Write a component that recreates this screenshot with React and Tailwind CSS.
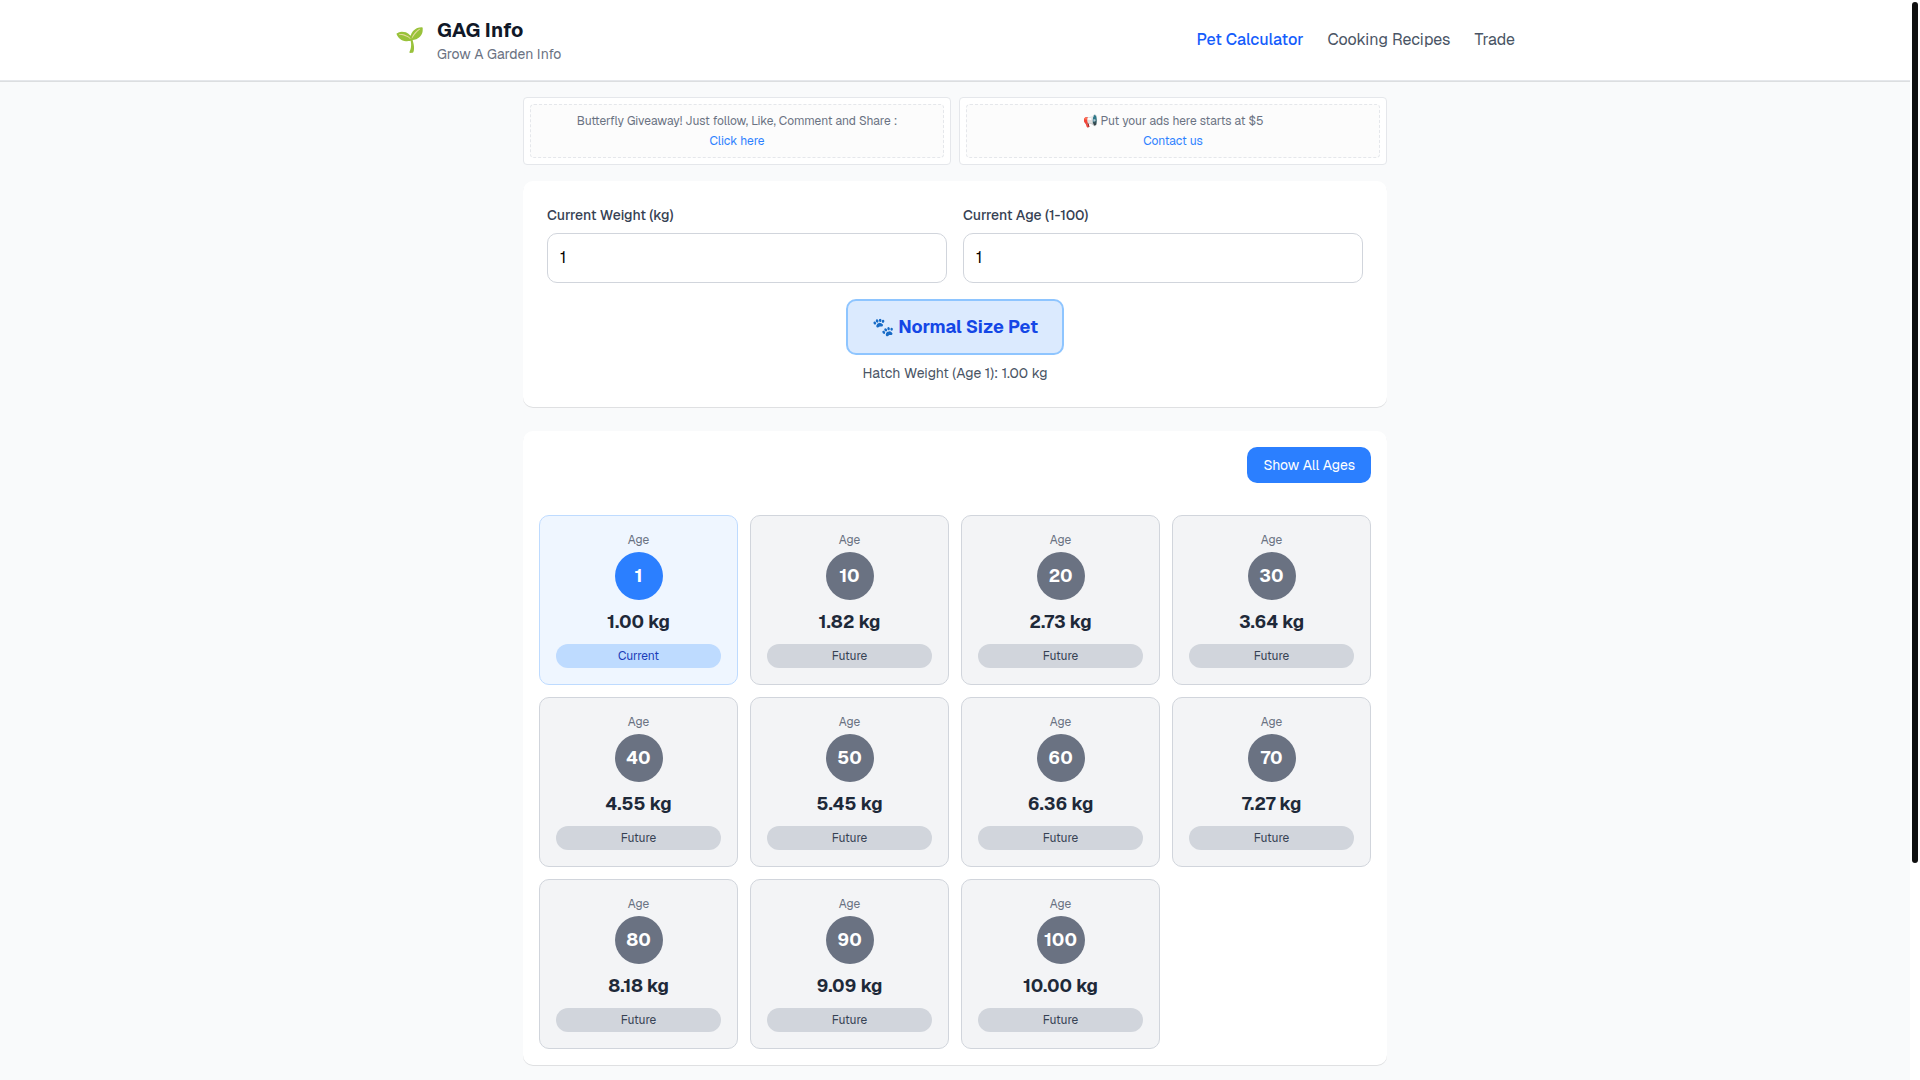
import { useState } from 'react'

const LINKS = ['Pet Calculator', 'Cooking Recipes', 'Trade']
const MILESTONES = [1, 10, 20, 30, 40, 50, 60, 70, 80, 90, 100]

// every age adds 1/11 of the hatch weight
const weightAt = (hatch, age) => (hatch * (age + 10)) / 11

const inputClass = 'w-full rounded-[10px] border border-gray-300 p-3 text-base leading-6 text-black outline-none focus:ring-2 focus:ring-blue-500'

function Header() {
  return (
    <header className="border-b border-gray-200 bg-white shadow-[0_1px_0_#dcdee0]">
      <div className="mx-auto flex max-w-6xl items-center justify-between px-4 py-4">
        <div className="flex items-center gap-3">
          <span className="text-2xl">🌱</span>
          <div>
            <h1 className="text-xl font-bold text-gray-900">GAG Info</h1>
            <p className="text-sm text-gray-500">Grow A Garden Info</p>
          </div>
        </div>
        <nav className="flex gap-6">
          {LINKS.map((link, i) => (
            <a key={link} href="#" className={i === 0 ? 'font-medium text-blue-600' : 'text-gray-600 hover:text-gray-900'}>
              {link}
            </a>
          ))}
        </nav>
      </div>
    </header>
  )
}

function Ad({ text, link }) {
  return (
    <div className="rounded-sm border border-gray-200 bg-white p-1.5">
      <div className="rounded-sm border border-dashed border-gray-200 bg-[#fcfcfc] p-1.5 text-center text-xs leading-5 text-gray-500">
        <p>{text}</p>
        <a href="#" className="text-blue-500 hover:underline">{link}</a>
      </div>
    </div>
  )
}

function AgeCard({ age, weight, current }) {
  return (
    <div className={`rounded-[10px] border p-4 text-center ${current ? 'border-blue-200 bg-blue-50' : 'border-gray-300 bg-gray-100'}`}>
      <div className="mb-1 text-xs text-gray-500">Age</div>
      <div className={`mx-auto mb-2 flex size-12 items-center justify-center rounded-full text-lg font-bold text-white ${current ? 'bg-blue-500' : 'bg-gray-500'}`}>
        {age}
      </div>
      <div className="mb-2 text-lg font-bold text-gray-800">{weight.toFixed(2)} kg</div>
      <div className={`rounded-full px-2 py-1 text-xs ${current ? 'bg-blue-200 text-blue-800' : 'bg-gray-300 text-gray-700'}`}>
        {current ? 'Current' : 'Future'}
      </div>
    </div>
  )
}

function App() {
  const [weight, setWeight] = useState('1')
  const [age, setAge] = useState('1')
  const [showAll, setShowAll] = useState(false)

  const currentAge = Number(age) || 1
  const hatch = (Number(weight) || 0) / weightAt(1, currentAge)
  const ages = showAll ? Array.from({ length: 100 }, (_, i) => i + 1) : MILESTONES

  return (
    <div className="min-h-screen bg-gray-50 pr-2.5 font-['Geist','Inter',sans-serif]">
      <Header />
      <main className="mx-auto max-w-4xl p-4">
        <div className="mb-4 grid grid-cols-2 gap-2">
          <Ad text="Butterfly Giveaway! Just follow, Like, Comment and Share :" link="Click here" />
          <Ad text="📢 Put your ads here starts at $5" link="Contact us" />
        </div>

        <section className="mb-6 rounded-[10px] bg-white p-6 shadow-[0_1px_0_#dfe0e2]">
          <div className="mb-4 grid grid-cols-2 gap-4">
            <div>
              <label htmlFor="weight" className="mb-2 block text-sm font-medium text-gray-700">Current Weight (kg)</label>
              <input id="weight" type="number" value={weight} onChange={e => setWeight(e.target.value)} className={inputClass} />
            </div>
            <div>
              <label htmlFor="age" className="mb-2 block text-sm font-medium text-gray-700">Current Age (1-100)</label>
              <input id="age" type="number" min="1" max="100" value={age} onChange={e => setAge(e.target.value)} className={inputClass} />
            </div>
          </div>
          <div className="flex flex-col items-center gap-2">
            <div className="rounded-[10px] border-2 border-blue-300 bg-blue-100 px-6 py-3 text-lg font-bold text-blue-700">
              🐾 Normal Size Pet
            </div>
            <p className="text-sm text-gray-600">Hatch Weight (Age 1): {hatch.toFixed(2)} kg</p>
          </div>
        </section>

        <section className="rounded-[10px] bg-white p-4 shadow-[0_1px_0_#dfe0e2]">
          <div className="mb-8 flex justify-end">
            <button onClick={() => setShowAll(!showAll)} className="rounded-[10px] bg-blue-500 px-4 py-2 text-sm text-white transition-colors hover:bg-blue-600">
              {showAll ? 'Show Less' : 'Show All Ages'}
            </button>
          </div>
          <div className="grid grid-cols-4 gap-3">
            {ages.map(a => (
              <AgeCard key={a} age={a} weight={weightAt(hatch, a)} current={a === currentAge} />
            ))}
          </div>
        </section>
      </main>

      {/* scroll track */}
      <div className="fixed inset-y-0 right-0 w-2.5 bg-white p-0.5">
        <div className="h-4/5 rounded-full bg-[#0f1010]" />
      </div>
    </div>
  )
}

export default App
